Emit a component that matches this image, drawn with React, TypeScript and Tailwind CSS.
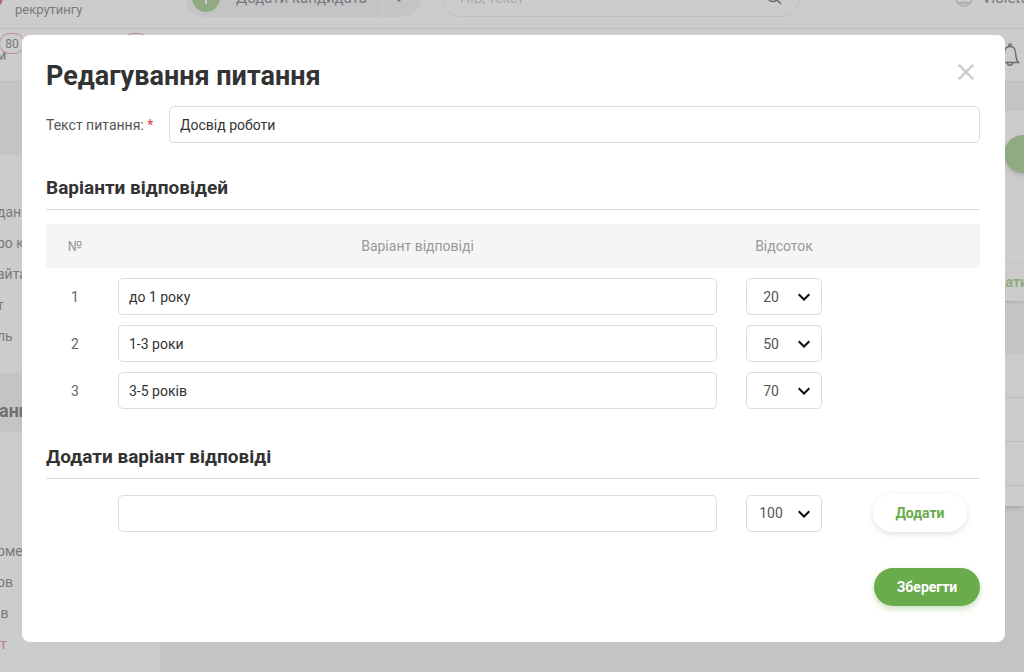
import React, { useState } from "react";

interface Answer {
  id: number;
  text: string;
  percent: string;
}

const initialAnswers: Answer[] = [
  { id: 1, text: "до 1 року", percent: "20" },
  { id: 2, text: "1-3 роки", percent: "50" },
  { id: 3, text: "3-5 років", percent: "70" },
];

const percentOptions = ["0", "10", "20", "30", "40", "50", "60", "70", "80", "90", "100"];

const profileLinks = ["дані", "ро ко", "айта", "т", "ль"];
const settingsLinks = ["оме", "ов", "ів"];

interface PercentSelectProps {
  label: string;
  value: string;
  onChange: (value: string) => void;
}

const PercentSelect: React.FC<PercentSelectProps> = ({ label, value, onChange }) => (
  <div className="relative">
    <select
      aria-label={label}
      value={value}
      onChange={(e) => onChange(e.target.value)}
      className="block h-[37px] w-full appearance-none rounded-[5px] border border-[#dcdcdc] bg-white pr-[26px] text-center text-sm text-[#555]"
    >
      {percentOptions.map((option) => (
        <option key={option}>{option}</option>
      ))}
    </select>
    <svg
      viewBox="0 0 12 8"
      className="pointer-events-none absolute top-[15px] right-3 h-2 w-3"
      fill="none"
      stroke="#111"
      strokeWidth="2"
    >
      <path d="M.7 1.200 6 6.500 11.300 1.200" />
    </svg>
  </div>
);

const inputClass =
  "block h-[37px] w-full rounded-[5px] border border-[#dcdcdc] bg-white px-2.5 text-sm text-[#333] outline-none";

const TopBar = () => (
  <header className="flex h-[29px] items-end overflow-hidden border-b border-[#f2f2f4] bg-white pb-[11px]">
    <div className="flex w-[185px] shrink-0 items-end">
      <div className="mb-2 -ml-5 h-6 w-[23px] rounded-full bg-[#f07aa6]" />
      <span className="ml-3 text-[13px] leading-[14px] text-[#999]">рекрутингу</span>
    </div>
    <div className="flex h-[38px] w-[236px] shrink-0 items-center rounded-full bg-[#f6f6f9]">
      <div className="ml-[7px] flex size-7 items-center justify-center rounded-full bg-[#b4d5a4]">
        <svg viewBox="0 0 12 12" className="size-3" stroke="#fff" strokeWidth="2">
          <path d="M6 0v12M0 6h12" />
        </svg>
      </div>
      <span className="ml-4 text-[15px] text-[#999]">Додати кандидата</span>
      <div className="ml-auto flex h-full w-[39px] items-center border-l border-white pl-3">
        <svg viewBox="0 0 8 6" className="mt-1 h-1.5 w-2" fill="none" stroke="#999" strokeWidth="1.5">
          <path d="m1 1 3 3 3-3" />
        </svg>
      </div>
    </div>
    <div className="ml-[21px] flex h-[38px] w-[358px] shrink-0 items-center justify-between rounded-full border border-[#f0f0f0] px-[17px]">
      <span className="text-sm text-[#d4d4d4]">ПІБ, текст</span>
      <svg viewBox="0 0 16 16" className="size-4" fill="none" stroke="#8c8c8c" strokeWidth="1.6">
        <circle cx="7" cy="6" r="5.500" />
        <path d="m11 10 4 4" />
      </svg>
    </div>
    <div className="ml-auto flex h-[38px] w-[69px] shrink-0 items-center">
      <svg viewBox="0 0 18 18" className="size-[18px] shrink-0" fill="none" stroke="#dcdcdc" strokeWidth="2">
        <circle cx="9" cy="9" r="8" />
        <path d="M4 14c1-3 9-3 10 0z" fill="#f2f2f2" stroke="none" />
        <path d="M4 14h10" />
      </svg>
      <span className="ml-[9px] text-[15px] whitespace-nowrap text-[#999]">Violett</span>
    </div>
  </header>
);

const CountBadge = ({ children }: { children?: React.ReactNode }) => (
  <span className="flex h-[21px] w-[26px] items-center justify-center rounded-full border border-[#f0aac4] bg-white text-xs text-[#999]">
    {children}
  </span>
);

const NavBar = () => (
  <nav className="relative flex h-[53px] items-center justify-between border-b border-[#f0f0f3] bg-white">
    <span className="-ml-1 text-sm text-[#999]">м</span>
    <div className="absolute top-1 -left-px flex gap-[98px]">
      <CountBadge>80</CountBadge>
      <CountBadge />
    </div>
    <svg viewBox="0 0 20 24" className="mr-1 h-6 w-5" fill="none" stroke="#858585" strokeWidth="1.4">
      <path d="M1.500 19.500c2.500-2.500 2.500-5 3-10 .3-4 2.300-6 5.500-6s5.200 2 5.500 6c.5 5 .5 7.500 3 10z" />
      <circle cx="10" cy="2.300" r="1.300" />
      <path d="M7.300 20c.4 3 5 3 5.400 0" />
    </svg>
  </nav>
);

const Sidebar = () => (
  <aside className="mt-[73px] w-40 bg-white">
    <ul className="-ml-[3px] h-[218px] pt-[42px]">
      {profileLinks.map((link) => (
        <li key={link} className="h-[31px] text-sm leading-[31px] text-[#999]">
          {link}
        </li>
      ))}
    </ul>
    <div className="h-[59px] bg-[#f6f6f9] pt-[26px] text-lg leading-6 font-bold text-[#8c8c8c]">
      <span className="-ml-px">анн</span>
    </div>
    <ul className="-ml-[3px] h-[240px] pt-[104px]">
      {settingsLinks.map((link) => (
        <li key={link} className="h-[31px] text-sm leading-[31px] text-[#999]">
          {link}
        </li>
      ))}
      <li className="h-[31px] pl-[3px] text-sm leading-[31px] text-[#f095b5]">т</li>
    </ul>
  </aside>
);

const Content = () => (
  <main className="mt-[29px] flex-1">
    <div className="flex h-[152px] justify-end border-b border-[#f8f8f8] bg-white pt-6">
      <div className="-mr-24 h-[38px] w-[116px] rounded-full bg-[#b4d5a4] shadow-md" />
    </div>
    <div className="flex h-[38px] justify-end bg-white text-sm leading-[38px] font-bold text-[#b4d5a4] shadow-sm">
      <span className="-mr-1">дати</span>
    </div>
    <div className="mt-[9px] h-[44px] bg-[#f7f7f7]" />
    <div className="h-[44px] border-b border-[#ececec] bg-white" />
    <div className="h-[44px] border-b border-[#ececec] bg-white" />
    <div className="h-[44px] border-b border-[#ececec] bg-white" />
    <div className="h-5 bg-white shadow-md" />
  </main>
);

const SectionTitle = ({ children }: { children: React.ReactNode }) => (
  <h2 className="border-b border-[#dcdcdc] pb-[9px] text-[19px] leading-6 font-bold text-[#333]">{children}</h2>
);

export default function App() {
  const [question, setQuestion] = useState("Досвід роботи");
  const [answers, setAnswers] = useState(initialAnswers);
  const [newText, setNewText] = useState("");
  const [newPercent, setNewPercent] = useState("100");

  const updateAnswer = (id: number, patch: Partial<Answer>) => {
    setAnswers(answers.map((answer) => (answer.id === id ? { ...answer, ...patch } : answer)));
  };

  const addAnswer = () => {
    if (!newText.trim()) return;
    setAnswers([...answers, { id: answers.length + 1, text: newText, percent: newPercent }]);
    setNewText("");
  };

  return (
    <div className="relative h-screen overflow-hidden bg-[#f6f6f9] font-['Roboto',sans-serif]">
      <TopBar />
      <NavBar />
      <div className="flex">
        <Sidebar />
        <Content />
      </div>

      <div className="absolute inset-0 overflow-y-auto bg-black/20 pt-[35px] pr-[19px] pl-[22px]">
        <div role="dialog" aria-labelledby="dialog-title" className="rounded-lg bg-white pt-[25px] pr-[25px] pb-9 pl-6">
          <div className="flex items-center justify-between pr-1.5">
            <h1 id="dialog-title" className="text-[27px] leading-8 font-bold text-[#333]">
              Редагування питання
            </h1>
            <button type="button" aria-label="Закрити" className="mb-2">
              <svg viewBox="0 0 16 16" className="size-4" stroke="#ccc" strokeWidth="2.4">
                <path d="M.8.8l14.400 14.400M15.200.8L.8 15.200" />
              </svg>
            </button>
          </div>

          <div className="mt-[14px] flex items-center">
            <label htmlFor="question" className="w-[123px] shrink-0 text-sm text-[#555]">
              Текст питання: <span className="text-[#e53935]">*</span>
            </label>
            <input
              id="question"
              value={question}
              onChange={(e) => setQuestion(e.target.value)}
              className={inputClass}
            />
          </div>

          <div className="mt-[33px]">
            <SectionTitle>Варіанти відповідей</SectionTitle>
          </div>
          <table className="mt-[14px] w-full table-fixed text-sm">
            <thead>
              <tr className="h-[44px] bg-[#f5f5f5] text-[#999]">
                <th className="w-[58px] font-normal">№</th>
                <th className="font-normal">Варіант відповіді</th>
                <th className="w-[106px] font-normal">Відсоток</th>
                <th className="w-[143px]" />
              </tr>
            </thead>
            <tbody>
              {answers.map((answer) => (
                <tr key={answer.id}>
                  <td className="pt-2.5 text-center text-[#666]">{answer.id}</td>
                  <td className="px-3.5 pt-2.5">
                    <input
                      aria-label={`Варіант ${answer.id}`}
                      value={answer.text}
                      onChange={(e) => updateAnswer(answer.id, { text: e.target.value })}
                      className={inputClass}
                    />
                  </td>
                  <td className="px-[15px] pt-2.5">
                    <PercentSelect
                      label={`Відсоток ${answer.id}`}
                      value={answer.percent}
                      onChange={(percent) => updateAnswer(answer.id, { percent })}
                    />
                  </td>
                  <td />
                </tr>
              ))}
            </tbody>
          </table>

          <div className="mt-9">
            <SectionTitle>Додати варіант відповіді</SectionTitle>
          </div>
          <div className="mt-[15px] grid grid-cols-[58px_1fr_106px_143px] items-center">
            <div className="col-start-2 px-3.5">
              <input
                aria-label="Новий варіант"
                value={newText}
                onChange={(e) => setNewText(e.target.value)}
                className={inputClass}
              />
            </div>
            <div className="px-[15px]">
              <PercentSelect label="Новий відсоток" value={newPercent} onChange={setNewPercent} />
            </div>
            <div className="pl-9">
              <button
                type="button"
                onClick={addAnswer}
                className="h-[38px] w-[94px] rounded-full bg-white text-sm font-bold text-[#6aab4c] shadow-[0_2px_6px_rgba(0,0,0,0.12)]"
              >
                Додати
              </button>
            </div>
          </div>

          <div className="mt-9 flex justify-end">
            <button
              type="button"
              className="h-[38px] w-[106px] rounded-full bg-[#6aab4c] text-sm font-bold text-white shadow-[0_3px_6px_rgba(106,171,76,0.35)]"
            >
              Зберегти
            </button>
          </div>
        </div>
      </div>
    </div>
  );
}
